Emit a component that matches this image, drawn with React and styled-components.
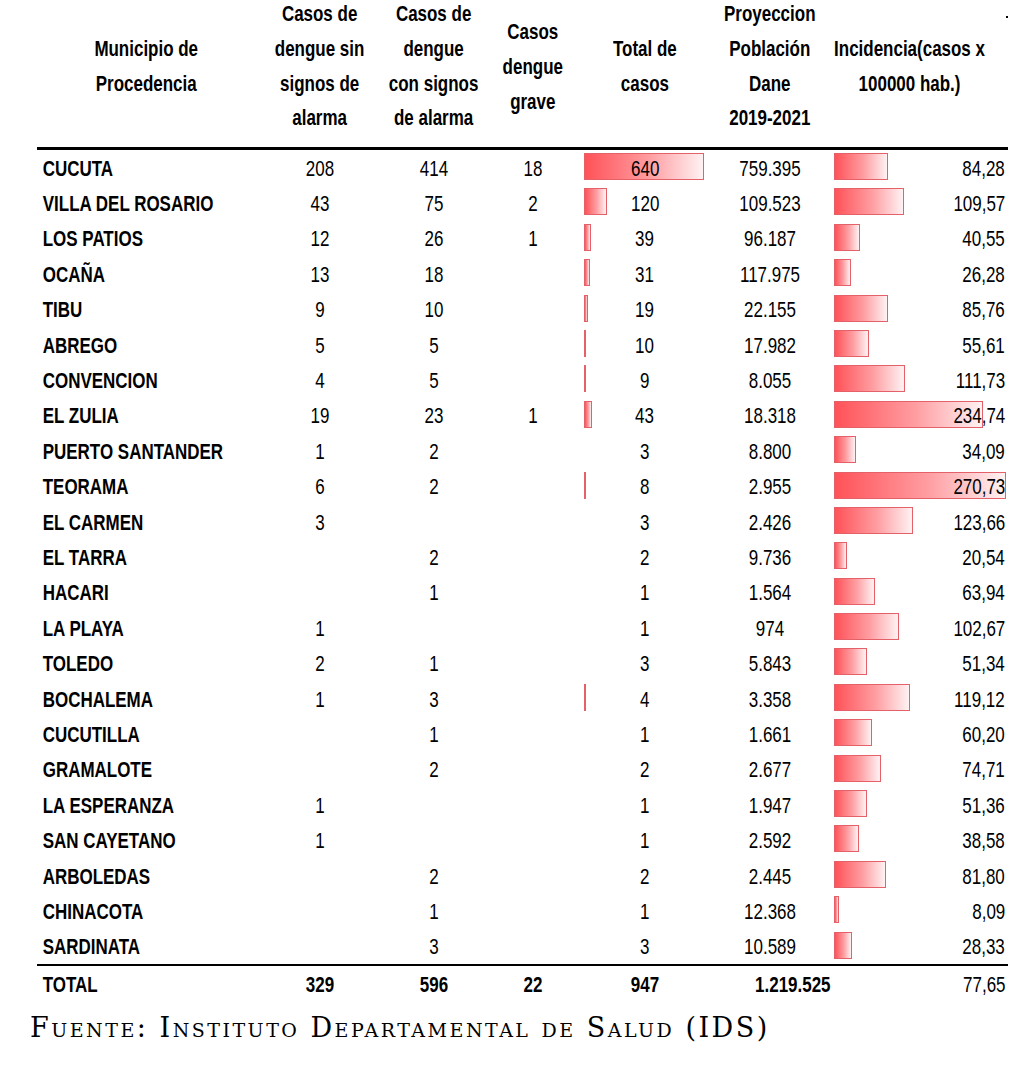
import React from 'react';
import styled, { createGlobalStyle } from 'styled-components';

const GlobalStyle = createGlobalStyle`
  html, body {
    margin: 0;
    padding: 0;
    background: #ffffff;
  }
  body {
    font-family: "Liberation Sans", Arial, sans-serif;
    color: #000;
    overflow: hidden;
  }
`;

// Calibri-ish narrow look: Liberation Sans squeezed horizontally
const SQUEEZE = 'scale(0.82, 1.1)';

const COLS = '218px 130px 98px 100px 124px 126px 175px';
const MAX_TOTAL = 640;
const MAX_INC = 270.73;
const TOTAL_BAR = 120;
const INC_BAR = 172;

const rows = [
  ['CUCUTA', 208, 414, 18, 640, '759.395', 84.28],
  ['VILLA DEL ROSARIO', 43, 75, 2, 120, '109.523', 109.57],
  ['LOS PATIOS', 12, 26, 1, 39, '96.187', 40.55],
  ['OCAÑA', 13, 18, null, 31, '117.975', 26.28],
  ['TIBU', 9, 10, null, 19, '22.155', 85.76],
  ['ABREGO', 5, 5, null, 10, '17.982', 55.61],
  ['CONVENCION', 4, 5, null, 9, '8.055', 111.73],
  ['EL ZULIA', 19, 23, 1, 43, '18.318', 234.74],
  ['PUERTO SANTANDER', 1, 2, null, 3, '8.800', 34.09],
  ['TEORAMA', 6, 2, null, 8, '2.955', 270.73],
  ['EL CARMEN', 3, null, null, 3, '2.426', 123.66],
  ['EL TARRA', null, 2, null, 2, '9.736', 20.54],
  ['HACARI', null, 1, null, 1, '1.564', 63.94],
  ['LA PLAYA', 1, null, null, 1, '974', 102.67],
  ['TOLEDO', 2, 1, null, 3, '5.843', 51.34],
  ['BOCHALEMA', 1, 3, null, 4, '3.358', 119.12],
  ['CUCUTILLA', null, 1, null, 1, '1.661', 60.2],
  ['GRAMALOTE', null, 2, null, 2, '2.677', 74.71],
  ['LA ESPERANZA', 1, null, null, 1, '1.947', 51.36],
  ['SAN CAYETANO', 1, null, null, 1, '2.592', 38.58],
  ['ARBOLEDAS', null, 2, null, 2, '2.445', 81.8],
  ['CHINACOTA', null, 1, null, 1, '12.368', 8.09],
  ['SARDINATA', null, 3, null, 3, '10.589', 28.33],
];

const fmt = (n) => n.toFixed(2).replace('.', ',');

const App = () => {
  return (
    <>
      <GlobalStyle />
      <Page>
        <Table>
          <HeaderRow>
            <HeadCell>Municipio de<br />Procedencia</HeadCell>
            <HeadCell>Casos de<br />dengue sin<br />signos de<br />alarma</HeadCell>
            <HeadCell>Casos de<br />dengue<br />con signos<br />de alarma</HeadCell>
            <HeadCell>Casos<br />dengue<br />grave</HeadCell>
            <HeadCell>Total de<br />casos</HeadCell>
            <HeadCell>Proyeccion<br />Población<br />Dane<br />2019-2021</HeadCell>
            <HeadCell $shift>Incidencia(casos x<br />100000 hab.)</HeadCell>
            <Speck />
          </HeaderRow>

          {rows.map(([name, sin, con, grave, total, pop, inc]) => (
            <Row key={name}>
              <NameCell>{name}</NameCell>
              <Cell>{sin ?? ''}</Cell>
              <Cell>{con ?? ''}</Cell>
              <Cell>{grave ?? ''}</Cell>
              <BarCell>
                {total >= 4 && (
                  <Bar style={{ width: Math.max(2, (total / MAX_TOTAL) * TOTAL_BAR) }} />
                )}
                <BarValue>{total}</BarValue>
              </BarCell>
              <Cell>{pop}</Cell>
              <BarCell $right>
                <Bar style={{ width: (inc / MAX_INC) * INC_BAR }} />
                <BarValue $right>{fmt(inc)}</BarValue>
              </BarCell>
            </Row>
          ))}

          <TotalRow>
            <NameCell>TOTAL</NameCell>
            <Cell $bold>329</Cell>
            <Cell $bold>596</Cell>
            <Cell $bold>22</Cell>
            <Cell $bold>947</Cell>
            <Cell $bold $right>1.219.525</Cell>
            <Cell $right>77,65</Cell>
          </TotalRow>
        </Table>

        <Source>Fuente: Instituto Departamental de Salud (IDS)</Source>
      </Page>
    </>
  );
};

export default App;

const Page = styled.div`
  padding-top: 1px;
  margin-top: -6px;
  width: 1034px;
`;

const Table = styled.div`
  margin-left: 37px;
  width: 971px;
`;

const HeaderRow = styled.div`
  position: relative;
  display: grid;
  grid-template-columns: ${COLS};
  grid-template-rows: 141px;
  align-items: center;
  box-sizing: border-box;
  height: 155px;
  padding-bottom: 11px;
  border-bottom: 3px solid #000;
`;

const HeadCell = styled.div`
  justify-self: center;
  text-align: center;
  font-weight: 700;
  font-size: 20.7px;
  line-height: 31.8px;
  white-space: nowrap;
  padding-right: ${(p) => (p.$shift ? '28px' : '0')};
  transform: ${SQUEEZE};
  transform-origin: center;
`;

const Speck = styled.span`
  position: absolute;
  right: 0;
  top: 21px;
  width: 2px;
  height: 2px;
  background: #000;
`;

const Row = styled.div`
  display: grid;
  grid-template-columns: ${COLS};
  align-items: center;
  height: 35.4px;
  font-size: 20.7px;
`;

const TotalRow = styled(Row)`
  border-top: 2.5px solid #000;
  height: 36px;
`;

const NameCell = styled.div`
  font-weight: 700;
  padding-left: 7px;
  white-space: nowrap;
  transform: ${SQUEEZE};
  transform-origin: left center;
`;

const Cell = styled.div`
  text-align: ${(p) => (p.$right ? 'right' : 'center')};
  font-weight: ${(p) => (p.$bold ? 700 : 400)};
  padding-right: ${(p) => (p.$right ? '3px' : '0')};
  white-space: nowrap;
  transform: ${SQUEEZE};
  transform-origin: ${(p) => (p.$right ? 'right center' : 'center')};
`;

const BarCell = styled.div`
  position: relative;
  height: 35.4px;
  display: flex;
  align-items: center;
  justify-content: ${(p) => (p.$right ? 'flex-end' : 'center')};
  padding: ${(p) => (p.$right ? '0 3px 0 1px' : '0 2px')};
`;

const Bar = styled.div`
  position: absolute;
  left: 1px;
  top: 3px;
  height: 27px;
  box-sizing: border-box;
  border: 1.5px solid #e4616a;
  background: linear-gradient(to right, #ff5258 0%, #ff9ea2 55%, #fff2f3 100%);
`;

const BarValue = styled.span`
  position: relative;
  display: inline-block;
  white-space: nowrap;
  transform: ${SQUEEZE};
  transform-origin: ${(p) => (p.$right ? 'right center' : 'center')};
`;

const Source = styled.div`
  margin: 11px 0 0 30px;
  font-family: "DejaVu Serif", "Liberation Serif", serif;
  font-variant: small-caps;
  font-size: 27px;
  line-height: 30px;
  letter-spacing: 2.5px;
  white-space: nowrap;
`;
